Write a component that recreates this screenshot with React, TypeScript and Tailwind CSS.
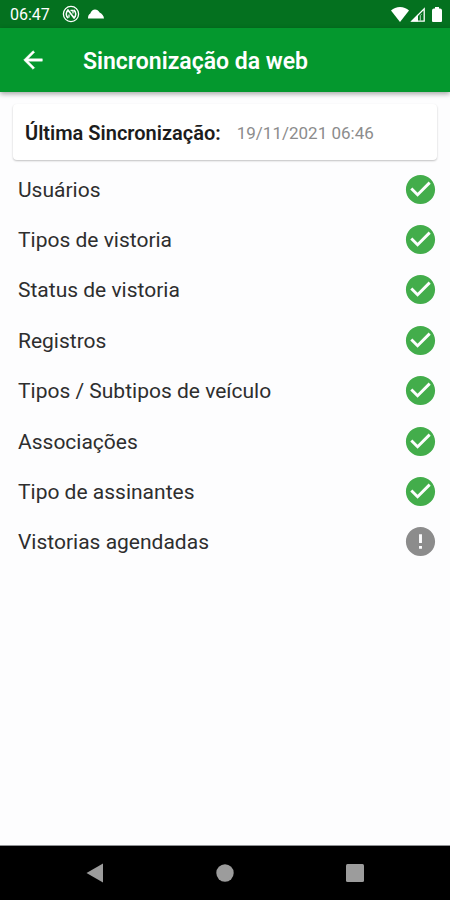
import type { ReactNode } from "react";

interface SyncItem {
  label: string;
  done: boolean;
}

const items: SyncItem[] = [
  { label: "Usuários", done: true },
  { label: "Tipos de vistoria", done: true },
  { label: "Status de vistoria", done: true },
  { label: "Registros", done: true },
  { label: "Tipos / Subtipos de veículo", done: true },
  { label: "Associações", done: true },
  { label: "Tipo de assinantes", done: true },
  { label: "Vistorias agendadas", done: false },
];

const StatusBar = () => (
  <div className="flex h-7 shrink-0 items-center bg-[#04711f] pl-[10px] pr-2 text-white">
    <span className="pt-px text-base leading-7">06:47</span>
    <svg viewBox="0 0 18 18" className="ml-3 size-[18px]" fill="none" stroke="currentColor">
      <circle cx="9" cy="9" r="7.6" strokeWidth="1.3" />
      <path d="M6.300 13A4.900 4.900 0 0 1 6.300 5M11.700 5A4.900 4.900 0 0 1 11.700 13" strokeWidth="1.600" />
      <path d="M5.500 4.500L12.500 13.500" strokeWidth="1.700" />
      <path d="M7 12.500V9.500M8.500 5.500h2.500v3" strokeWidth="1.300" />
    </svg>
    <svg viewBox="0 0 16 10" className="ml-2 h-[10px] w-4" fill="currentColor">
      <path d="M0 9.500C0 7 .800 5.300 2.300 4.500C3.300 2 5 .500 7 .500C9 .500 10.500 1.600 11.600 3.600C14 4.800 15.800 7 16 9.500Z" />
    </svg>
    <div className="ml-auto flex items-center">
      <svg viewBox="0 0 18 15" className="h-[15px] w-[18px]" fill="currentColor">
        <path d="M9 15L0 3.500C2.500 1.200 5.500 0 9 0s6.500 1.200 9 3.500z" />
      </svg>
      <svg viewBox="0 0 15 15" className="ml-px h-[15px] w-[15px]">
        <path d="M1.800 14.200L14.200 1.800V14.200Z" fill="none" stroke="currentColor" strokeWidth="1.300" />
        <path d="M1 14.500L8 7.500V14.500Z" fill="currentColor" />
        <path d="M10.300 13.500V8.500L11.500 7.300" fill="none" stroke="currentColor" strokeWidth="0.700" />
      </svg>
      <svg viewBox="0 0 10 15" className="ml-[7px] h-[15px] w-[10px]" fill="currentColor">
        <path d="M3 0h4v1.500h1q2 0 2 2V14q0 1-1 1H1q-1 0-1-1V3.500q0-2 2-2h1z" />
      </svg>
    </div>
  </div>
);

const AppBar = () => (
  <header className="relative z-10 flex h-16 shrink-0 items-center bg-[#04982e] pl-[18px] text-white shadow-[0_2px_5px_rgba(0,0,0,0.35)]">
    <button type="button" aria-label="Voltar" className="flex size-[30px] items-center justify-center">
      <svg viewBox="0 0 24 24" className="size-7" fill="currentColor" stroke="currentColor" strokeWidth="0.4">
        <path d="M20 11H7.830l5.590-5.590L12 4l-8 8 8 8 1.410-1.410L7.830 13H20v-2z" />
      </svg>
    </button>
    <h1 className="ml-[35px] pt-[3px] text-[23px] font-semibold leading-8">Sincronização da web</h1>
  </header>
);

const StatusIcon = ({ done }: { done: boolean }) => (
  <svg
    viewBox="0 0 24 24"
    role="img"
    aria-label={done ? "Sincronizado" : "Pendente"}
    className={done ? "size-[35px] text-[#43ad4b]" : "size-[35px] text-[#8c8c8c]"}
    fill="currentColor"
  >
    {done ? (
      <path d="M12 2C6.480 2 2 6.480 2 12s4.480 10 10 10 10-4.480 10-10S17.520 2 12 2zm-2 15l-5-5 1.410-1.410L10 14.170l7.590-7.590L19 8l-9 9z" />
    ) : (
      <path d="M12 2C6.480 2 2 6.480 2 12s4.480 10 10 10 10-4.480 10-10S17.520 2 12 2zm1 15h-2v-2h2v2zm0-4h-2V7h2v6z" />
    )}
  </svg>
);

const NavButton = ({ label, children }: { label: string; children: ReactNode }) => (
  <button type="button" aria-label={label} className="flex h-10 w-10 items-center justify-center">
    <svg viewBox="0 0 20 20" className="size-5" fill="currentColor">
      {children}
    </svg>
  </button>
);

export default function App() {
  return (
    <div className="flex min-h-screen flex-col bg-[#fdfdfe] font-['Roboto',sans-serif]">
      <StatusBar />
      <AppBar />

      <main className="flex-1 px-3 pt-3">
        <section className="mx-px flex items-center rounded-[4px] bg-white px-3 pb-[11px] pt-[13px] shadow-[0_1px_2px_rgba(0,0,0,0.24)]">
          <h2 className="text-xl font-semibold leading-8 text-[#1c1c1c]">Última Sincronização:</h2>
          <span className="ml-4 text-[17px] leading-8 text-[#8c8c8c]">19/11/2021 06:46</span>
        </section>

        <ul className="mt-1 grid min-h-[403px] auto-rows-fr">
          {items.map((item) => (
            <li key={item.label} className="flex items-center justify-between pl-[6px]">
              <span className="pt-px text-[21px] leading-8 text-[#2e2e2e]">{item.label}</span>
              <StatusIcon done={item.done} />
            </li>
          ))}
        </ul>
      </main>

      <nav className="flex shrink-0 items-center justify-center gap-[90px] border-t border-[#8f9194] bg-black py-[7px] text-[#9c9c9c]">
        <NavButton label="Voltar">
          <path d="M18 0.500V19.500L1.500 10Z" />
        </NavButton>
        <NavButton label="Início">
          <circle cx="10" cy="10" r="8.700" />
        </NavButton>
        <NavButton label="Recentes">
          <rect x="1" y="1" width="18" height="18" rx="1.500" />
        </NavButton>
      </nav>
    </div>
  );
}
